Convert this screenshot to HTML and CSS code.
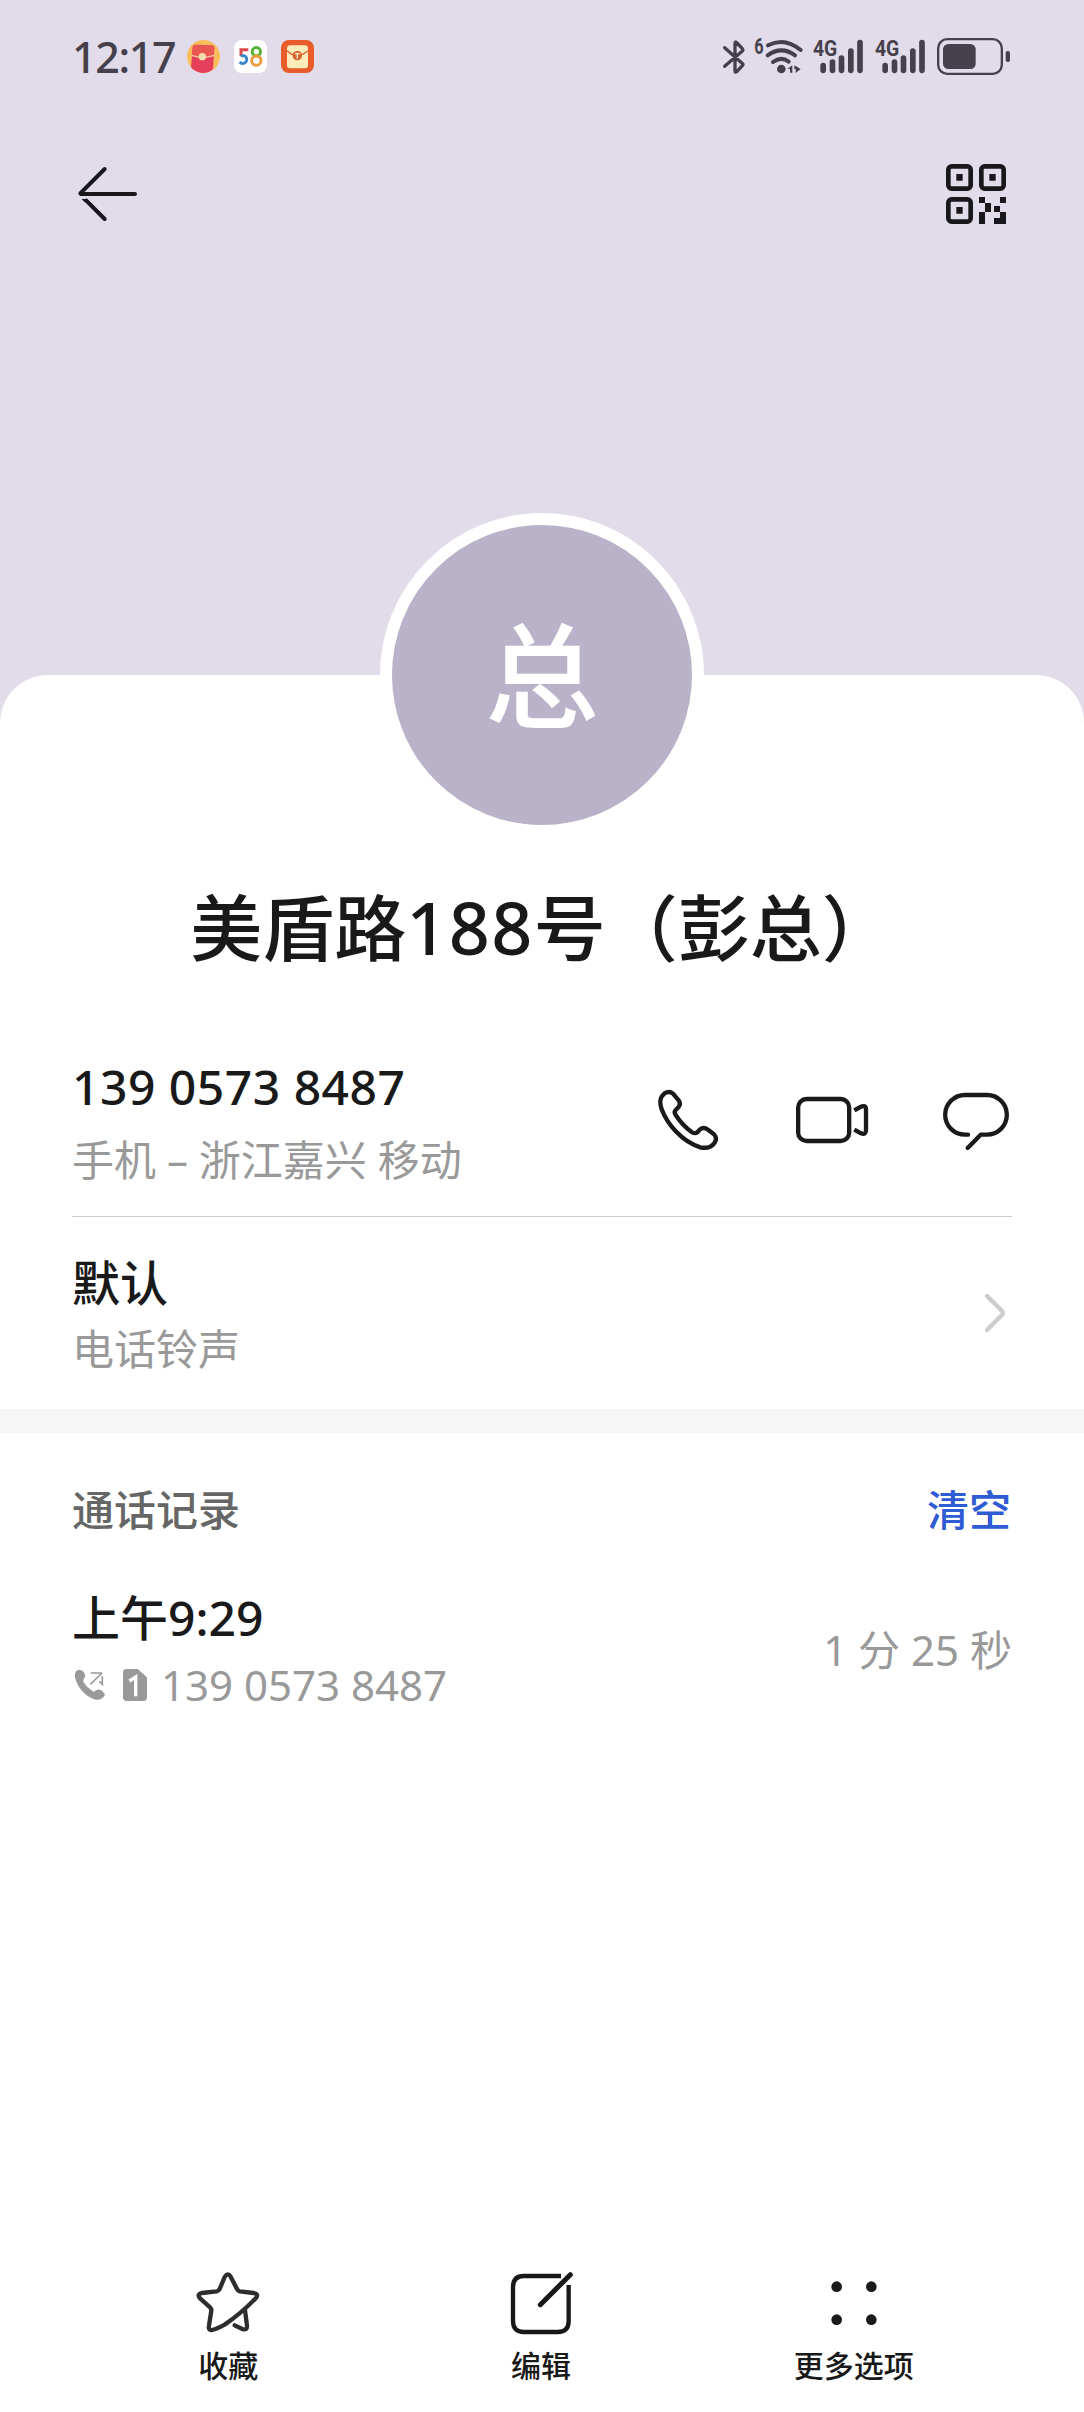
FILE: index.html
```html
<!DOCTYPE html>
<html lang="zh-CN">
<head>
<meta charset="utf-8">
<title>联系人</title>
<link rel="stylesheet" href="styles.css">
</head>
<body>
<div class="screen">
  <header class="status">
    <span class="clock">12:17</span>
    <svg class="app" viewBox="0 0 99 99"><defs><clipPath id="round"><circle cx="49.500" cy="49.500" r="49.500"/></clipPath></defs><circle cx="49.500" cy="49.500" r="49.500" fill="#f9bd5b"/><g clip-path="url(#round)"><path d="M17 22Q17 14 26 14L74 16Q82 17 82 25L78 88Q60 104 38 98Q19 94 12 84Z" fill="#e5405b"/><path d="M17 22Q17 14 26 14L74 16Q82 17 82 25L80 46Q48 58 14 45Z" fill="#ea5650"/><path d="M14 46Q45 58 82 46" stroke="#f7c9a0" stroke-width="4" fill="none"/></g><circle cx="46" cy="50" r="11" fill="#f4dcae"/></svg>
    <svg class="app" viewBox="0 0 99 99"><rect width="99" height="99" rx="24" fill="#fff"/><g fill="none" stroke-width="9"><path d="M43 29H21V48" stroke="#e0474a"/><path d="M20 47H30A12 12 0 1 1 17 66" stroke="#3a86c8"/><circle cx="67" cy="35" r="12.500" stroke="#56b435"/><circle cx="67" cy="62" r="14" stroke="#ee9a3d"/></g></svg>
    <svg class="app" viewBox="0 0 99 99"><rect width="99" height="99" rx="24" fill="#e85b2a"/><rect x="18" y="16" width="63" height="69" rx="9" fill="#fdebb9"/><path d="M18 32Q36 48 49 47Q64 46 81 32" fill="none" stroke="#d9622f" stroke-width="4"/><circle cx="49" cy="47" r="14" fill="#d9622f"/><path d="M42 41H56M49 41V56" stroke="#fff1c8" stroke-width="4"/></svg>
    <div class="system">
      <svg class="bt" viewBox="66 48 72 117"><path d="M74 80L128 128Q130 130 127 134L111 151Q105 157 105 149V68Q105 59 111 66L127 83Q130 87 127 90L74 136" class="ink" stroke-width="10"/></svg>
      <svg class="wifi" viewBox="162 48 150 117"><text x="163" y="98" class="net" textLength="28" lengthAdjust="spacingAndGlyphs">6</text><g class="ink" stroke-width="12"><path d="M204 73Q254 47 302 87M203 103Q244 73 285 103M219 123Q243 105 266 122"/></g><circle cx="244" cy="144" r="13" class="solid"/><path d="M262 144L277 133V155H270V144ZM283 133L302 144L287 156V144H283Z" class="solid"/></svg>
      <svg class="sig" viewBox="336 48 156 117"><text x="339" y="104" class="net" textLength="73" lengthAdjust="spacingAndGlyphs">4G</text><path class="ink" stroke-width="17" d="M369.500 134V148M397.500 123V148M424.500 111V148M452.500 90V148M480 65V148"/></svg>
      <svg class="sig" viewBox="336 48 156 117"><text x="339" y="104" class="net" textLength="73" lengthAdjust="spacingAndGlyphs">4G</text><path class="ink" stroke-width="17" d="M369.500 134V148M397.500 123V148M424.500 111V148M452.500 90V148M480 65V148"/></svg>
      <svg class="battery" viewBox="708 48 225 117"><rect x="714.500" y="54.500" width="191" height="104" rx="27" class="ink" stroke-width="7"/><rect x="729" y="69" width="98" height="75" rx="16" class="solid"/><rect x="917" y="90" width="13" height="33" rx="6" class="solid"/></svg>
    </div>
  </header>
  <nav class="top">
    <svg class="back" viewBox="81 75 183 174"><g fill="none" stroke="#18171b" stroke-width="12" stroke-linecap="round" stroke-linejoin="round"><path d="M164 87L91 160L93 162H255"/><path d="M164 237L109 182"/></g><path d="M95 177H112L112 187L103 186Z" fill="#18171b"/></svg>
    <svg class="qr" viewBox="78 72 180 180"><g fill="none" stroke="#18171b" stroke-width="14"><rect x="85" y="79" width="67" height="67" rx="10"/><rect x="184" y="79" width="67" height="67" rx="10"/><rect x="85" y="178" width="67" height="67" rx="10"/></g><path fill="#18171b" d="M109 102h19v20h-19zM208 102h19v20h-19zM109 201h19v20h-19zM177 171h18v18h18v27h-18v-27h-18zM240 171h18v18h-18zM222 198h18v18h18v36h-36v-18h18v-18h-18zM177 216h18v36h-18z"/></svg>
  </nav>
  <main class="sheet">
    <div class="avatar">总</div>
    <h1 class="name">美盾路<span class="digits">188</span>号（彭总）</h1>
    <section class="row phone">
      <div>
        <div class="primary number">139 0573 8487</div>
        <div class="secondary place">手机 – 浙江嘉兴 移动</div>
      </div>
      <div class="actions">
        <svg class="call" viewBox="81 81 186 198"><path d="M97 107L104 100Q117 91 129 101L146 121Q154 131 145 142L137 150Q131 156 137 165Q157 196 186 217Q196 222 203 216L210 208Q221 199 234 209L251 222Q263 233 254 248Q240 268 211 262C155 245 111 191 95 148Q86 120 97 107Z"/></svg>
        <svg class="video" viewBox="495 81 222 198"><rect x="504.500" y="117" width="153" height="126" rx="25"/><path d="M673 151L691 141Q708 133 708 149V210Q708 226 693 220L673 209" stroke-linecap="butt"/></svg>
        <svg class="message" viewBox="936 81 204 198"><path d="M1014 224H1005A59.500 59.500 0 0 1 1005 105H1071A59.500 59.500 0 0 1 1071 224H1052L1013 264"/></svg>
      </div>
    </section>
    <section class="row ringtone">
      <div>
        <div class="primary">默认</div>
        <div class="secondary">电话铃声</div>
      </div>
      <svg class="chevron" viewBox="1062 699 66 120"><path d="M1071 708L1116 753Q1121 759 1116 765L1071 810"/></svg>
    </section>
    <div class="band"></div>
    <section class="history-head">
      <span>通话记录</span>
      <span class="clear">清空</span>
    </section>
    <section class="row record">
      <div>
        <div class="primary time">上午9:29</div>
        <div class="secondary detail">
          <svg class="outgoing" viewBox="75 804 90 96"><path d="M77 812Q88 801 99 811Q110 823 102 832Q97 838 101 844Q111 861 128 871Q133 873 138 868Q147 862 156 869L163 877Q167 882 160 889Q149 900 132 895C102 883 81 857 75 829Q74 818 77 812Z" fill="#999"/><path d="M121 850L156 816M122 816H157M157 826V850L148 841" fill="none" stroke="#999" stroke-width="5"/></svg>
          <svg class="sim" viewBox="219 804 72 96"><path d="M229 804H263L291 829V889Q291 900 280 900H230Q219 900 219 889V815Q219 804 229 804Z" fill="#999"/><path d="M238 840L257 828V886" fill="none" stroke="#fff" stroke-width="10"/></svg>
          <span>139 0573 8487</span>
        </div>
      </div>
      <div class="secondary duration">1 分 25 秒</div>
    </section>
    <footer class="tools">
      <div class="tool"><svg viewBox="78 93 192 192"><path stroke="#2d2d2e" stroke-width="13" d="M194 256L217 267Q232 272 231 257L225 211M126 270Q114 272 117 256L124 212Q125 207 121 203L91 176Q79 163 95 159L140 154Q146 153 149 147L164 111Q173 96 182 110L201 147Q204 153 209 154L251 159Q269 163 256 176Q210 223 165 253Q142 266 126 270Z"/></svg>收藏</div>
      <div class="tool"><svg viewBox="1017 93 192 192"><path stroke="#18181a" stroke-width="13" stroke-linecap="butt" d="M1173 108H1062Q1029 108 1029 141V243Q1029 276 1062 276H1163Q1196 276 1196 243V135"/><path stroke="#18181a" stroke-width="15" d="M1111 194L1201 104"/></svg>编辑</div>
      <div class="tool"><svg viewBox="186 93 192 192"><g fill="#1a1a1a"><circle cx="230" cy="140" r="16"/><circle cx="334" cy="140" r="16"/><circle cx="230" cy="239" r="16"/><circle cx="334" cy="239" r="16"/></g></svg>更多选项</div>
    </footer>
  </main>
</div>
</body>
</html>
```

FILE: styles.css
```css
* { box-sizing: border-box; }
body {
  margin: 0;
  background: #e1dbea;
  color: #191919;
  font-family: "Noto Sans", "Noto Sans CJK SC", sans-serif;
  font-weight: 500;
}
svg { display: block; flex: none; overflow: visible; }
.screen {
  width: 1084px;
  height: 2412px;
  display: flex;
  flex-direction: column;
  overflow: hidden;
}

/* Status bar */
.status {
  height: 112px;
  padding: 0 72px;
  display: flex;
  align-items: center;
  color: #45404a;
}
.clock {
  width: 115px;
  padding-top: 2px;
  font-size: 43px;
  line-height: 110px;
  letter-spacing: -1.4px;
  white-space: nowrap;
}
.app { width: 33px; height: 33px; margin: 1px 14px 0 0; }
.system { display: flex; margin-left: auto; }
.system svg { height: 39px; }
.system .bt { width: 24px; margin-right: 8px; }
.system .wifi { width: 50px; margin-right: 8px; }
.system .sig { width: 52px; margin-right: 10px; }
.system .battery { width: 75px; margin-right: 1px; }
.ink { fill: none; stroke: #45404a; stroke-linecap: round; stroke-linejoin: round; }
.solid { fill: #45404a; }
.net {
  font-family: Roboto, sans-serif;
  font-size: 64px;
  font-weight: 700;
  fill: #45404a;
}

/* Navigation */
.top {
  height: 563px;
  padding: 52px 78px 0 77px;
  display: flex;
  justify-content: space-between;
  align-items: flex-start;
}
.back { width: 61px; height: 58px; margin-top: 1px; }
.qr { width: 60px; height: 60px; }

/* Contact sheet */
.sheet {
  flex: 1;
  background: #fff;
  border-radius: 48px 48px 0 0;
  display: flex;
  flex-direction: column;
}
.avatar {
  width: 324px;
  height: 324px;
  margin: -162px auto 0;
  border: 12px solid #fff;
  border-radius: 50%;
  background: #b9b2c8;
  color: #fff;
  font-size: 114px;
  line-height: 300px;
  text-align: center;
}
.name {
  margin: 41px 0 0;
  font-size: 72px;
  line-height: 99px;
  font-weight: 500;
  text-align: center;
  white-space: nowrap;
}
.digits { letter-spacing: 1.3px; }
.row {
  margin: 0 72px;
  display: flex;
  justify-content: space-between;
}
.primary { font-size: 48px; line-height: 66px; white-space: nowrap; }
.secondary {
  font-size: 42px;
  line-height: 66px;
  font-weight: 400;
  color: #999;
  white-space: nowrap;
}
.phone { height: 240px; padding-top: 77px; border-bottom: 1px solid #ccc; }
.phone .number { letter-spacing: 0.5px; }
.place { margin-top: 7px; }
.actions { display: flex; padding: 33px 2px 0 0; }
.actions svg { height: 66px; fill: none; stroke: #1a1a1a; stroke-width: 13; stroke-linecap: round; stroke-linejoin: round; }
.actions .call { width: 62px; margin-right: 76px; }
.actions .video { width: 74px; margin-right: 73px; }
.actions .message { width: 68px; }
.ringtone { height: 192px; padding-top: 33px; }
.chevron {
  width: 22px;
  height: 40px;
  margin: 43px 6px 0 0;
  fill: none;
  stroke: #ccc;
  stroke-width: 13;
  stroke-linecap: round;
}
.band { height: 24px; background: #f6f6f6; }
.history-head {
  height: 145px;
  padding: 44px 73px 0 72px;
  display: flex;
  justify-content: space-between;
  font-size: 42px;
  line-height: 66px;
  color: #666;
}
.clear { color: #2f5cd5; }
.record { padding-top: 7px; }
.detail { display: flex; align-items: center; margin-top: 1px; }
.outgoing { width: 30px; height: 32px; margin: 0 18px 0 3px; }
.sim { width: 24px; height: 32px; margin-right: 14px; }
.duration { padding-top: 32px; }

/* Bottom toolbar */
.tools {
  margin: auto 74px 0 72px;
  height: 141px;
  display: grid;
  grid-template-columns: repeat(3, 1fr);
}
.tool {
  display: flex;
  flex-direction: column;
  align-items: center;
  font-size: 30px;
  line-height: 62px;
}
.tool svg { width: 64px; height: 64px; fill: none; stroke-linecap: round; stroke-linejoin: round; }
```
